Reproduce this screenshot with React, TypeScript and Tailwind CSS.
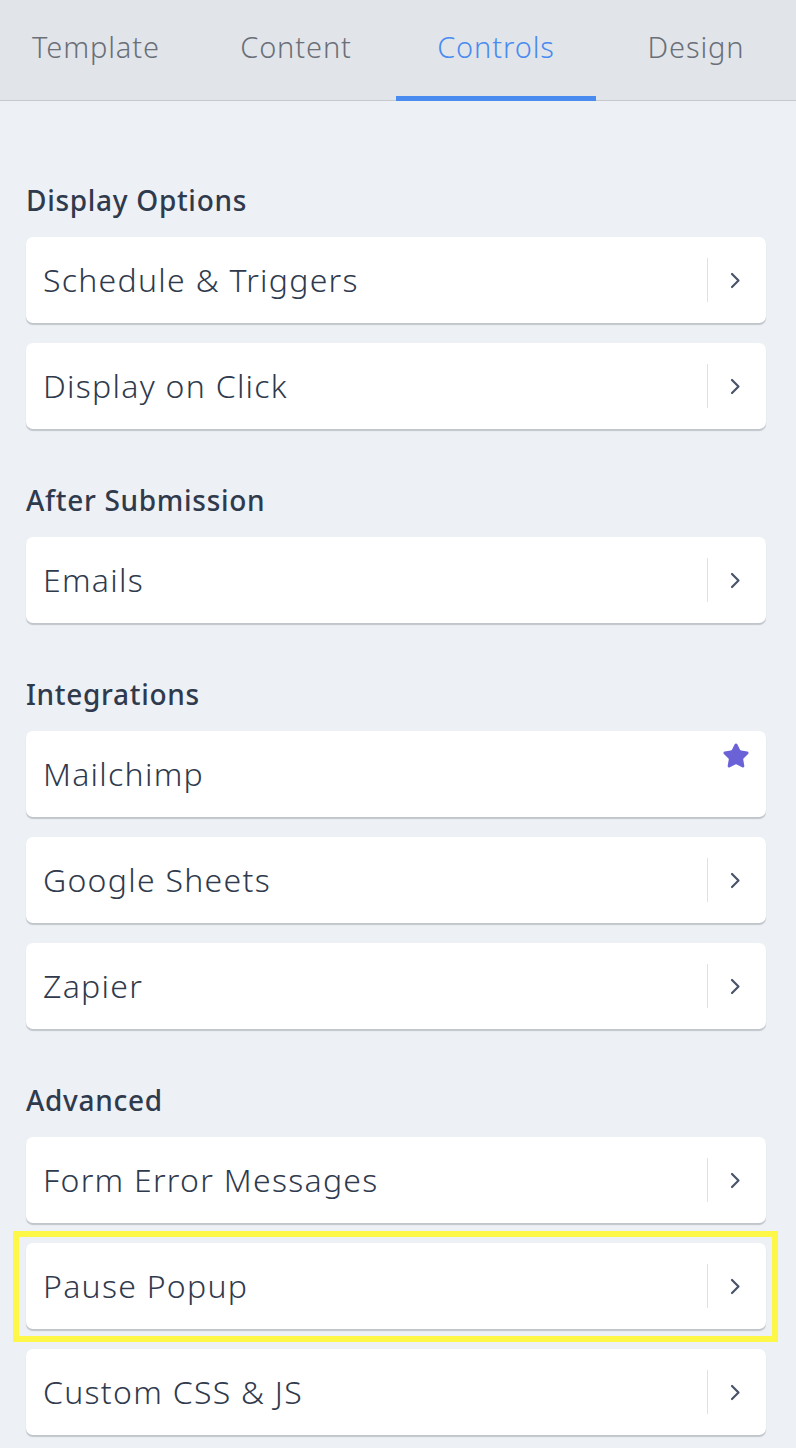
import { Star } from "lucide-react";

const tabs = ["Template", "Content", "Controls", "Design"];

const sections: { title: string; items: { label: string; star?: boolean; highlight?: boolean }[] }[] = [
  { title: "Display Options", items: [{ label: "Schedule & Triggers" }, { label: "Display on Click" }] },
  { title: "After Submission", items: [{ label: "Emails" }] },
  {
    title: "Integrations",
    items: [{ label: "Mailchimp", star: true }, { label: "Google Sheets" }, { label: "Zapier" }],
  },
  {
    title: "Advanced",
    items: [{ label: "Form Error Messages" }, { label: "Pause Popup", highlight: true }, { label: "Custom CSS & JS" }],
  },
];

function Chevron() {
  return (
    <svg width="11" height="17" viewBox="0 0 11 17" fill="none">
      <polyline points="2,2 8.5,8.5 2,15" stroke="#4a5468" strokeWidth="2.2" strokeLinecap="round" strokeLinejoin="round" />
    </svg>
  );
}

function Row({ label, star, highlight }: { label: string; star?: boolean; highlight?: boolean }) {
  return (
    <div className="relative">
      <div className="relative flex h-[86px] items-center rounded-[7px] bg-white pl-[17px] pr-[25px] shadow-[0_2px_1px_rgba(60,70,85,0.25)]">
        <span className="flex-1 text-[32px] leading-none font-light tracking-[0.04em] text-[#2f3a4d]">{label}</span>
        {star ? (
          <div className="-mr-[9px] self-start pt-[11px]">
            <Star size={28} fill="#6b62d8" color="#6b62d8" strokeWidth={1.5} strokeLinejoin="round" />
          </div>
        ) : (
          <div className="flex h-full items-center">
            <div className="h-[44px] w-px bg-[#dde1e6]" />
            <div className="ml-[22px] flex items-center">
              <Chevron />
            </div>
          </div>
        )}
      </div>
      {highlight && (
        <div className="pointer-events-none absolute -top-[12px] -bottom-[13px] -left-[13px] -right-[12px] border-[6px] border-[#fdf748]" />
      )}
    </div>
  );
}

export default function App() {
  return (
    <div className="min-h-screen bg-[#edf0f4] font-['Noto_Sans','Lato',sans-serif]">
      <div className="flex h-[101px] border-b border-[#c5c9ce] bg-[#e1e5ea]">
        <div className="-ml-[4px] flex">
          {tabs.map((t) => (
            <div
              key={t}
              className={
                t === "Controls"
                  ? "relative flex w-[200px] items-center justify-center pb-[6px] text-[29px] font-light tracking-[0.03em] text-[#4a8bf0]"
                  : "relative flex w-[200px] items-center justify-center pb-[6px] text-[29px] font-light tracking-[0.03em] text-[#6a6f78]"
              }
            >
              {t}
              {t === "Controls" && <div className="absolute -bottom-px left-0 right-0 h-[5px] bg-[#4a8bf0]" />}
            </div>
          ))}
        </div>
      </div>

      <div className="flex flex-col gap-[53px] pl-[26px] pr-[30px] pt-[81px]">
        {sections.map((s) => (
          <section key={s.title}>
            <h2 className="mb-[19px] h-[36px] text-[28px] font-medium leading-[36px] tracking-[0.025em] text-[#2f3a4d]">
              {s.title}
            </h2>
            <div className="flex flex-col gap-[20px]">
              {s.items.map((it) => (
                <Row key={it.label} {...it} />
              ))}
            </div>
          </section>
        ))}
      </div>
    </div>
  );
}
